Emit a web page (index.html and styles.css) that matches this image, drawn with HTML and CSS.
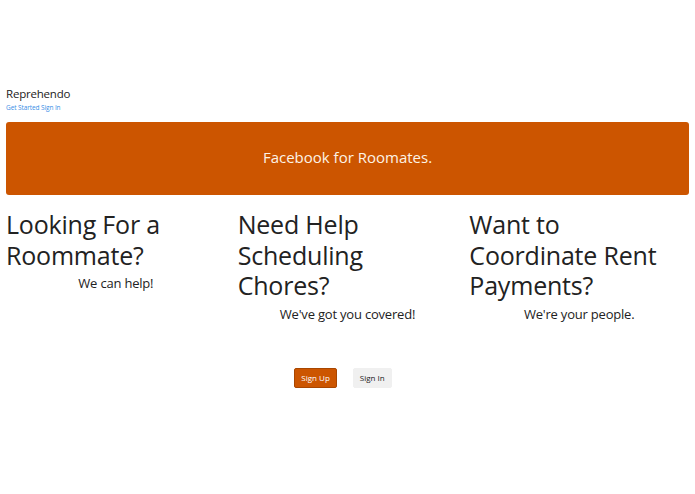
FILE: index.html
```html
<!DOCTYPE html>
<html>
<head>
<meta charset="utf-8">
<link rel="stylesheet" href="styles.css">
</head>
<body>
<div class="page">
  <header class="top">
    <div class="brand">Reprehendo</div>
    <nav class="links"><a href="#">Get Started</a> <a href="#">Sign In</a></nav>
  </header>
  <div class="banner">Facebook for Roomates.</div>
  <div class="cols">
    <div class="col">
      <h1>Looking For a Roommate?</h1>
      <p>We can help!</p>
    </div>
    <div class="col">
      <h1>Need Help Scheduling Chores?</h1>
      <p>We've got you covered!</p>
    </div>
    <div class="col">
      <h1>Want to Coordinate Rent Payments?</h1>
      <p>We're your people.</p>
    </div>
  </div>
  <div class="actions">
    <button class="btn primary">Sign Up</button>
    <button class="btn light">Sign In</button>
  </div>
</div>
</body>
</html>
```
FILE: styles.css
```css
html, body { margin: 0; padding: 0; background: #fff; }
body { font-family: "Open Sans", "Noto Sans", sans-serif; color: #212529; }
.page { padding: 86px 6px 0 6px; }
.top { display: flex; flex-direction: column; }
.brand { font-size: 11.5px; line-height: 16px; color: #222; letter-spacing: -0.2px; }
.links { font-size: 6.5px; line-height: 10px; margin-top: 1px; letter-spacing: -0.1px; }
.links a { color: #3a8ee6; text-decoration: none; }
.banner {
  margin-top: 9px;
  height: 73px;
  padding-bottom: 3px;
  box-sizing: border-box;
  background: #cc5500;
  border-radius: 3px;
  color: #fdf3e6;
  font-size: 15px;
  display: flex;
  align-items: center;
  justify-content: center;
}
.cols {
  display: grid;
  grid-template-columns: 1fr 1fr 1fr;
  column-gap: 12px;
  margin-top: 14px;
}
.col h1 {
  margin: 0;
  font-weight: 400;
  font-size: 25px;
  line-height: 30.5px;
  letter-spacing: -0.2px;
  color: #222;
}
.col p {
  margin: 4px 0 0;
  text-align: center;
  font-size: 13px;
  line-height: 18px;
  letter-spacing: -0.2px;
  color: #222;
}
.actions {
  display: flex;
  justify-content: center;
  gap: 16px;
  margin-top: 45px;
  padding-right: 9px;
}
.btn {
  font-family: inherit;
  font-size: 8px;
  height: 20px;
  padding: 0 6px;
  border-radius: 2px;
  border: 1px solid transparent;
}
.btn.primary { background: #cc5500; color: #fff; border-color: #a84600; }
.btn.light { background: #f0f0f0; color: #222; border-color: #f0f0f0; }
```
